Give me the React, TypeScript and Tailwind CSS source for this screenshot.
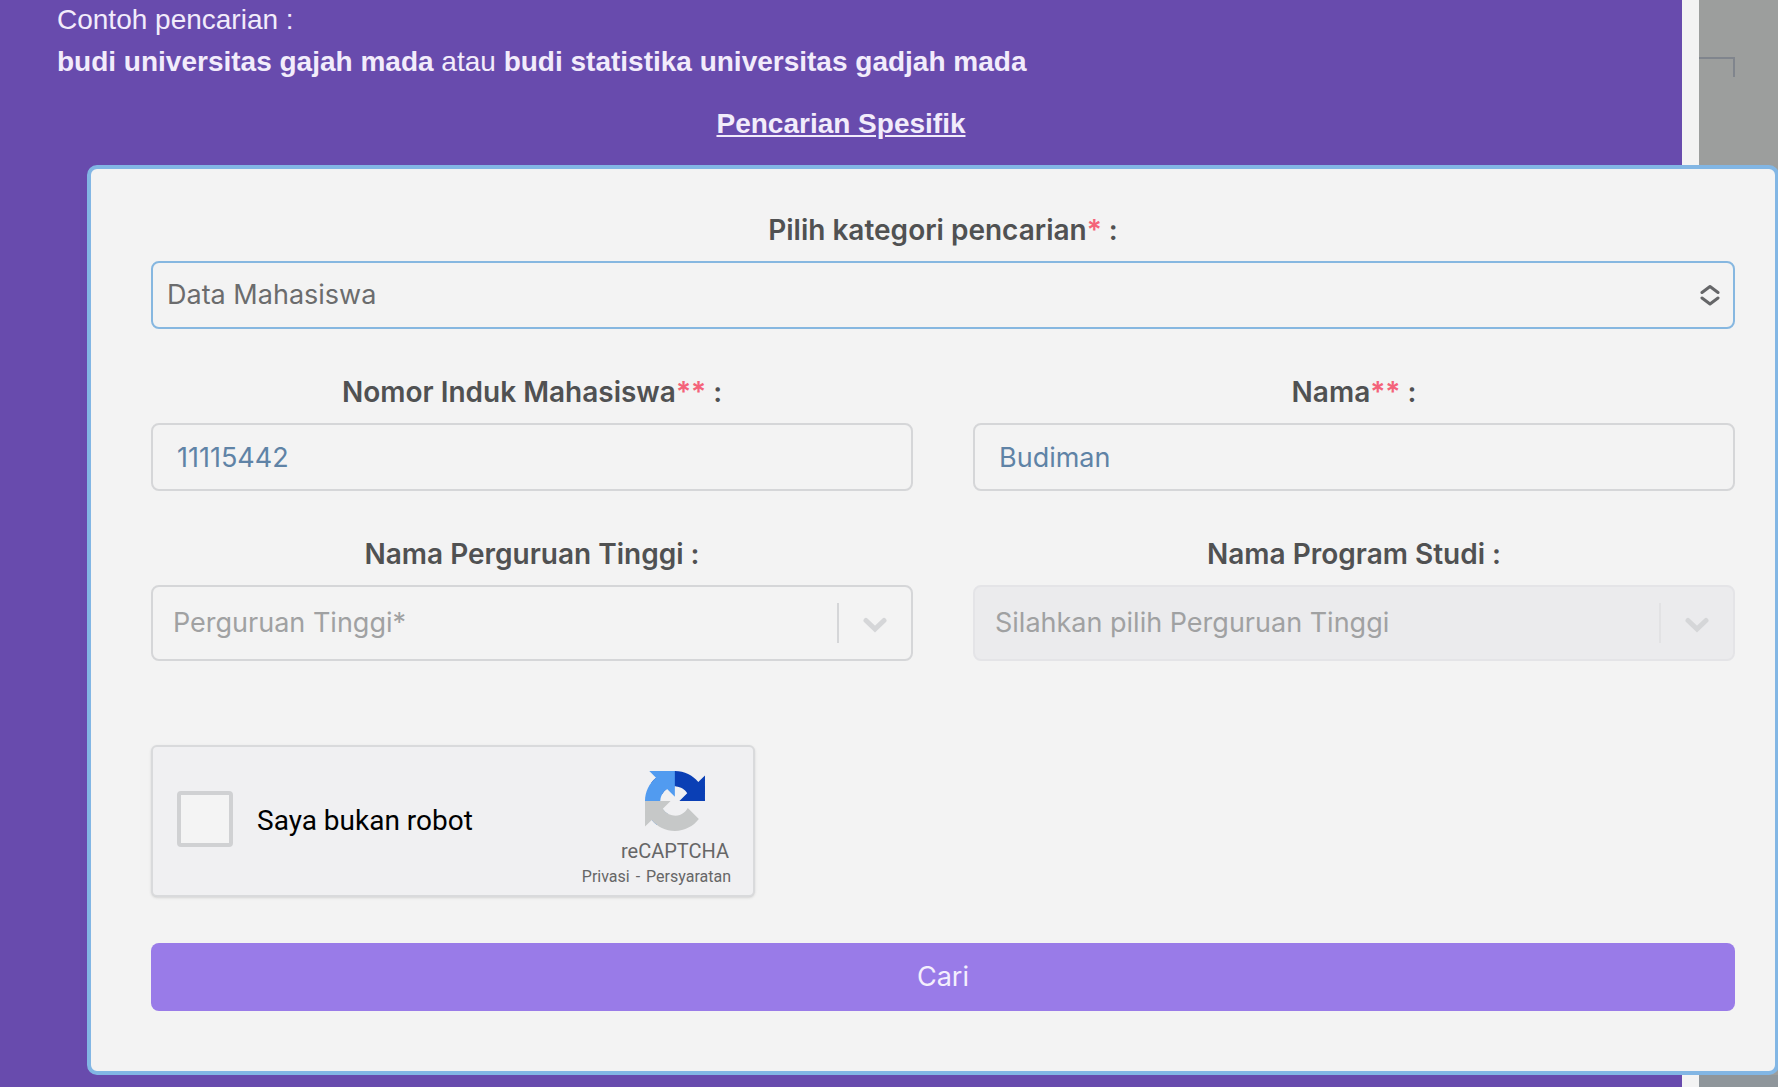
import { useState, type ReactNode } from "react";

const LABEL = "mb-2.5 text-center text-[28px] leading-[42px] font-semibold text-[#505152]";
const TEXT_INPUT =
  "h-[68px] w-full rounded-lg border-2 border-[#d5d6d8] bg-transparent px-6 text-[27px] text-[#5f83a6] outline-none";

type FieldProps = {
  id: string;
  label: string;
  mark?: string;
  children: ReactNode;
};

function Field({ id, label, mark, children }: FieldProps) {
  return (
    <div className="flex flex-col">
      <label htmlFor={id} className={LABEL}>
        {label}
        {mark && <span className="text-[#f4637a]">{mark}</span>} :
      </label>
      {children}
    </div>
  );
}

type SearchSelectProps = {
  id: string;
  placeholder: string;
  disabled?: boolean;
};

function SearchSelect({ id, placeholder, disabled }: SearchSelectProps) {
  return (
    <div
      className={`grid h-[76px] grid-cols-[1fr_74px] rounded-lg border-2 ${
        disabled ? "border-[#e4e4e7] bg-[#ebebed]" : "border-[#d5d6d8]"
      }`}
    >
      <select
        id={id}
        disabled={disabled}
        className="col-span-2 col-start-1 row-start-1 w-full appearance-none bg-transparent px-5 text-[27px] text-[#a0a1a2] opacity-100 outline-none"
      >
        <option>{placeholder}</option>
      </select>
      <div
        className={`pointer-events-none col-start-2 row-start-1 my-4 flex items-center justify-center border-l-2 ${
          disabled ? "border-[#e2e2e4]" : "border-[#d5d6d8]"
        }`}
      >
        <svg
          viewBox="0 0 24 16"
          className="mt-1 h-4 w-6"
          fill="none"
          stroke="#d5d6d8"
          strokeWidth="5"
          strokeLinecap="round"
        >
          <path d="M3 3.5 L12 12 L21 3.5" />
        </svg>
      </div>
    </div>
  );
}

function RecaptchaLogo() {
  return (
    <svg viewBox="0 0 64 64" className="size-[60px]" aria-hidden="true">
      <path
        fill="#0a3fb5"
        d="M64 31.955l-.033-1.37V4.687l-7.16 7.16C50.948 4.674 42.033.093 32.05.093c-10.4 0-19.622 4.96-25.458 12.64l11.736 11.86a15.55 15.55 0 0 1 4.754-5.334c2.05-1.6 4.952-2.906 8.968-2.906.485 0 .86.057 1.135.163 4.976.393 9.288 3.14 11.828 7.124l-8.307 8.307L64 31.953"
      />
      <path
        fill="#519bf0"
        d="M31.862.094l-1.37.033H4.594l7.16 7.16C4.58 13.147 0 22.06 0 32.046c0 10.4 4.96 19.622 12.64 25.458L24.5 45.768a15.55 15.55 0 0 1-5.334-4.754c-1.6-2.05-2.906-4.952-2.906-8.968 0-.485.057-.86.163-1.135.393-4.976 3.14-9.288 7.124-11.828l8.307 8.307L31.86.095"
      />
      <path
        fill="#c6c8c8"
        d="M.001 32.045l.033 1.37v25.898l7.16-7.16c5.86 7.173 14.774 11.754 24.76 11.754 10.4 0 19.622-4.96 25.458-12.64l-11.736-11.86a15.55 15.55 0 0 1-4.754 5.334c-2.05 1.6-4.952 2.906-8.968 2.906-.485 0-.86-.057-1.135-.163-4.976-.393-9.288-3.14-11.828-7.124l8.307-8.307c-10.522.04-22.4.066-27.295-.005"
      />
    </svg>
  );
}

function Recaptcha() {
  return (
    <div className="flex h-[152px] w-[604px] items-center rounded-md border-2 border-[#d9dadc] bg-[#f0f0f2] pl-6 font-[Roboto,sans-serif] shadow-sm">
      <input
        id="robot"
        type="checkbox"
        className="mb-1 size-14 appearance-none rounded-sm border-4 border-[#d0d1d3] bg-[#f4f4f4]"
      />
      <label htmlFor="robot" className="ml-6 text-[28px] text-black">
        Saya bukan robot
      </label>
      <div className="mr-[22px] ml-auto flex flex-col items-end self-end text-[#666667]">
        <div className="mr-[26px]">
          <RecaptchaLogo />
        </div>
        <div className="mt-2 mr-[2px] text-[20px] leading-6">reCAPTCHA</div>
        <div className="mb-1 text-[16px] leading-7">
          <a href="#privasi">Privasi</a>
          <span className="mx-1.5">-</span>
          <a href="#persyaratan">Persyaratan</a>
        </div>
      </div>
    </div>
  );
}

export default function App() {
  const [nim, setNim] = useState("11115442");
  const [nama, setNama] = useState("Budiman");

  return (
    <div className="flex min-h-screen overflow-x-hidden bg-[#f3f3f3]">
      <main className="min-w-0 flex-1 bg-[#684bad] pb-3">
        <section className="-mt-px pl-[57px] font-['Liberation_Sans',Arial,sans-serif] text-[28px] leading-[42px] text-[#f2ecfb]">
          <p>Contoh pencarian :</p>
          <p>
            <b>budi universitas gajah mada</b> atau <b>budi statistika universitas gadjah mada</b>
          </p>
        </section>
        <h2 className="mt-5 text-center font-['Liberation_Sans',Arial,sans-serif] text-[28px] leading-[42px] font-bold text-[#f2ecfb] underline">
          Pencarian Spesifik
        </h2>

        {/* The form is wider than the panel and hangs over its right edge */}
        <form
          className="relative z-10 mt-5 -mr-[97px] ml-[87px] rounded-[10px] border-4 border-[#82b6e4] bg-[#f3f3f3] pt-10 pr-10 pb-[60px] pl-[60px] font-[Inter,sans-serif]"
          onSubmit={(e) => e.preventDefault()}
        >
          <Field id="kategori" label="Pilih kategori pencarian" mark="*">
            <div className="grid h-[68px] grid-cols-[1fr_46px] items-center rounded-lg border-2 border-[#86b7e0]">
              <select
                id="kategori"
                className="col-span-2 col-start-1 row-start-1 h-full w-full appearance-none bg-transparent px-3.5 text-[27px] text-[#6b6c6d] outline-none"
              >
                <option>Data Mahasiswa</option>
              </select>
              <svg
                viewBox="0 0 20 22"
                className="pointer-events-none col-start-2 row-start-1 h-[22px] w-5 justify-self-center"
                fill="none"
                stroke="#656668"
                strokeWidth="3"
                strokeLinecap="round"
                strokeLinejoin="round"
              >
                <path d="M2 8.5 L10 2.5 L18 8.5 M2 14 L10 20 L18 14" />
              </svg>
            </div>
          </Field>

          <div className="mt-[42px] grid grid-cols-2 gap-x-[60px] gap-y-[42px]">
            <Field id="nim" label="Nomor Induk Mahasiswa" mark="**">
              <input
                id="nim"
                type="text"
                value={nim}
                onChange={(e) => setNim(e.target.value)}
                className={TEXT_INPUT}
              />
            </Field>
            <Field id="nama" label="Nama" mark="**">
              <input
                id="nama"
                type="text"
                value={nama}
                onChange={(e) => setNama(e.target.value)}
                className={TEXT_INPUT}
              />
            </Field>
            <Field id="pt" label="Nama Perguruan Tinggi">
              <SearchSelect id="pt" placeholder="Perguruan Tinggi*" />
            </Field>
            <Field id="prodi" label="Nama Program Studi">
              <SearchSelect id="prodi" placeholder="Silahkan pilih Perguruan Tinggi" disabled />
            </Field>
          </div>

          <div className="mt-[84px]">
            <Recaptcha />
          </div>

          <button
            type="submit"
            className="mt-[46px] h-[68px] w-full rounded-lg bg-[#997be8] text-[27px] text-[#f4effd]"
          >
            Cari
          </button>
        </form>
      </main>

      {/* Dimmed page behind the panel */}
      <aside className="ml-[17px] flex w-[79px] flex-col justify-between bg-[#9c9e9d] pt-[57px]">
        <div className="h-5 w-9 border-t-2 border-r-2 border-[#80858d]" />
        <div className="h-3 bg-[#8f969b]" />
      </aside>
    </div>
  );
}
